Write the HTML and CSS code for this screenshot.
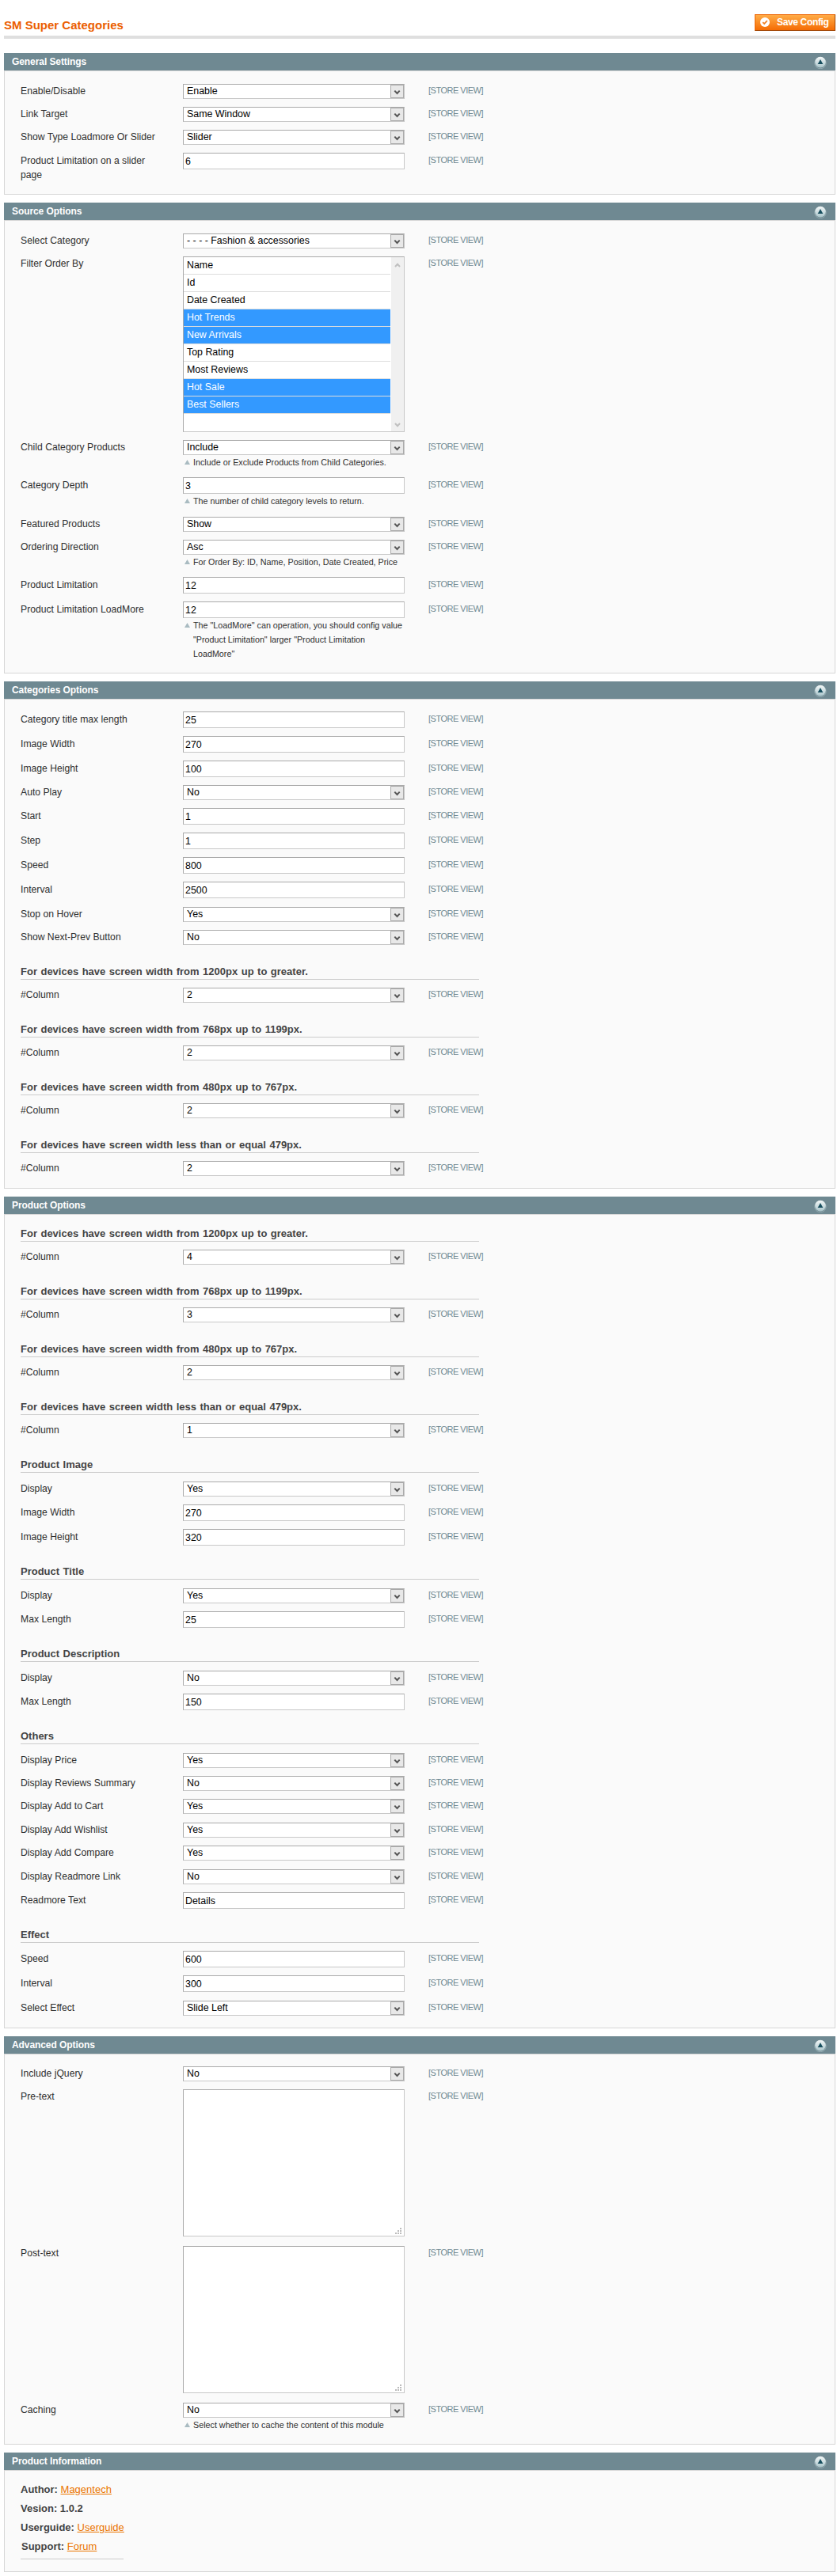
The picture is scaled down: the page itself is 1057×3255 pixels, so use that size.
FILE: index.html
```html
<!DOCTYPE html>
<html lang="en">
<head>
<meta charset="utf-8">
<title>SM Super Categories</title>
<link rel="stylesheet" href="styles.css">
</head>
<body>
<svg class="defs" width="0" height="0" aria-hidden="true">
  <defs>
    <linearGradient id="knob" x1="0" y1="0" x2="0" y2="1">
      <stop offset="0" stop-color="#f4f8f8"/><stop offset="1" stop-color="#a9c4ca"/>
    </linearGradient>
    <symbol id="collapse" viewBox="0 0 16 16">
      <circle cx="8" cy="8.6" r="7.2" fill="none" stroke="#94abb1" stroke-width="1"/>
      <circle cx="8" cy="7.6" r="6.8" fill="url(#knob)"/>
      <path d="M8 4 L11.3 10 H4.7 Z" fill="#174e5e"/>
    </symbol>
  </defs>
</svg>
<main class="page">
  <header class="head">
    <h1 class="title">SM Super Categories</h1>
    <button class="save" type="button">
      <svg width="12" height="12" viewBox="0 0 12 12"><circle cx="6" cy="6" r="6" fill="#fff"/><path d="M3.2 6.2 L5.2 8 L8.8 4.2" fill="none" stroke="#f08023" stroke-width="1.7"/></svg>
      <span>Save Config</span>
    </button>
  </header>

  <section class="panel">
    <h2 class="bar"><span>General Settings</span><svg class="toggle"><use href="#collapse"/></svg></h2>
    <div class="body body--general">
      <div class="row"><label>Enable/Disable</label><div class="select">Enable</div><span class="scope">[STORE VIEW]</span></div>
      <div class="row"><label>Link Target</label><div class="select">Same Window</div><span class="scope">[STORE VIEW]</span></div>
      <div class="row"><label>Show Type Loadmore Or Slider</label><div class="select">Slider</div><span class="scope">[STORE VIEW]</span></div>
      <div class="row row--text"><label>Product Limitation on a slider page</label><div class="input">6</div><span class="scope">[STORE VIEW]</span></div>
    </div>
  </section>

  <section class="panel">
    <h2 class="bar"><span>Source Options</span><svg class="toggle"><use href="#collapse"/></svg></h2>
    <div class="body">
      <div class="row"><label>Select Category</label><div class="select">- - - - Fashion &amp; accessories</div><span class="scope">[STORE VIEW]</span></div>
      <div class="row"><label>Filter Order By</label>
        <div class="multi">
          <ul class="options">
            <li>Name</li><li>Id</li><li>Date Created</li><li class="on">Hot Trends</li><li class="on">New Arrivals</li><li>Top Rating</li><li>Most Reviews</li><li class="on">Hot Sale</li><li class="on">Best Sellers</li>
          </ul>
          <div class="scroll">
            <svg width="8" height="6" viewBox="0 0 8 6"><path d="M1 5 L4 1.8 L7 5" fill="none" stroke="#bfbfbf" stroke-width="2"/></svg>
            <svg width="8" height="6" viewBox="0 0 8 6"><path d="M1 1 L4 4.2 L7 1" fill="none" stroke="#bfbfbf" stroke-width="2"/></svg>
          </div>
        </div>
        <span class="scope">[STORE VIEW]</span></div>
      <div class="row"><label>Child Category Products</label><div><div class="select">Include</div><p class="note">Include or Exclude Products from Child Categories.</p></div><span class="scope">[STORE VIEW]</span></div>
      <div class="row row--text"><label>Category Depth</label><div><div class="input">3</div><p class="note">The number of child category levels to return.</p></div><span class="scope">[STORE VIEW]</span></div>
      <div class="row nudge"><label>Featured Products</label><div class="select">Show</div><span class="scope">[STORE VIEW]</span></div>
      <div class="row"><label>Ordering Direction</label><div><div class="select">Asc</div><p class="note">For Order By: ID, Name, Position, Date Created, Price</p></div><span class="scope">[STORE VIEW]</span></div>
      <div class="row row--text"><label>Product Limitation</label><div class="input">12</div><span class="scope">[STORE VIEW]</span></div>
      <div class="row row--text"><label>Product Limitation LoadMore</label><div><div class="input">12</div><p class="note">The "LoadMore" can operation, you should config value<br>"Product Limitation" larger "Product Limitation<br>LoadMore"</p></div><span class="scope">[STORE VIEW]</span></div>
    </div>
  </section>

  <section class="panel">
    <h2 class="bar"><span>Categories Options</span><svg class="toggle"><use href="#collapse"/></svg></h2>
    <div class="body body--tight">
      <div class="row row--text"><label>Category title max length</label><div class="input">25</div><span class="scope">[STORE VIEW]</span></div>
      <div class="row row--text"><label>Image Width</label><div class="input">270</div><span class="scope">[STORE VIEW]</span></div>
      <div class="row row--text"><label>Image Height</label><div class="input">100</div><span class="scope">[STORE VIEW]</span></div>
      <div class="row"><label>Auto Play</label><div class="select">No</div><span class="scope">[STORE VIEW]</span></div>
      <div class="row row--text"><label>Start</label><div class="input">1</div><span class="scope">[STORE VIEW]</span></div>
      <div class="row row--text"><label>Step</label><div class="input">1</div><span class="scope">[STORE VIEW]</span></div>
      <div class="row row--text"><label>Speed</label><div class="input">800</div><span class="scope">[STORE VIEW]</span></div>
      <div class="row row--text"><label>Interval</label><div class="input">2500</div><span class="scope">[STORE VIEW]</span></div>
      <div class="row nudge"><label>Stop on Hover</label><div class="select">Yes</div><span class="scope">[STORE VIEW]</span></div>
      <div class="row"><label>Show Next-Prev Button</label><div class="select">No</div><span class="scope">[STORE VIEW]</span></div>
      <h3 class="group">For devices have screen width from 1200px up to greater.</h3>
      <div class="row"><label>#Column</label><div class="select">2</div><span class="scope">[STORE VIEW]</span></div>
      <h3 class="group">For devices have screen width from 768px up to 1199px.</h3>
      <div class="row"><label>#Column</label><div class="select">2</div><span class="scope">[STORE VIEW]</span></div>
      <h3 class="group">For devices have screen width from 480px up to 767px.</h3>
      <div class="row"><label>#Column</label><div class="select">2</div><span class="scope">[STORE VIEW]</span></div>
      <h3 class="group">For devices have screen width less than or equal 479px.</h3>
      <div class="row"><label>#Column</label><div class="select">2</div><span class="scope">[STORE VIEW]</span></div>
    </div>
  </section>

  <section class="panel">
    <h2 class="bar"><span>Product Options</span><svg class="toggle"><use href="#collapse"/></svg></h2>
    <div class="body body--flush">
      <h3 class="group">For devices have screen width from 1200px up to greater.</h3>
      <div class="row"><label>#Column</label><div class="select">4</div><span class="scope">[STORE VIEW]</span></div>
      <h3 class="group">For devices have screen width from 768px up to 1199px.</h3>
      <div class="row"><label>#Column</label><div class="select">3</div><span class="scope">[STORE VIEW]</span></div>
      <h3 class="group">For devices have screen width from 480px up to 767px.</h3>
      <div class="row"><label>#Column</label><div class="select">2</div><span class="scope">[STORE VIEW]</span></div>
      <h3 class="group">For devices have screen width less than or equal 479px.</h3>
      <div class="row"><label>#Column</label><div class="select">1</div><span class="scope">[STORE VIEW]</span></div>
      <h3 class="group">Product Image</h3>
      <div class="row nudge"><label>Display</label><div class="select">Yes</div><span class="scope">[STORE VIEW]</span></div>
      <div class="row row--text"><label>Image Width</label><div class="input">270</div><span class="scope">[STORE VIEW]</span></div>
      <div class="row row--text"><label>Image Height</label><div class="input">320</div><span class="scope">[STORE VIEW]</span></div>
      <h3 class="group">Product Title</h3>
      <div class="row nudge"><label>Display</label><div class="select">Yes</div><span class="scope">[STORE VIEW]</span></div>
      <div class="row row--text"><label>Max Length</label><div class="input">25</div><span class="scope">[STORE VIEW]</span></div>
      <h3 class="group">Product Description</h3>
      <div class="row nudge"><label>Display</label><div class="select">No</div><span class="scope">[STORE VIEW]</span></div>
      <div class="row row--text"><label>Max Length</label><div class="input">150</div><span class="scope">[STORE VIEW]</span></div>
      <h3 class="group">Others</h3>
      <div class="row nudge"><label>Display Price</label><div class="select">Yes</div><span class="scope">[STORE VIEW]</span></div>
      <div class="row"><label>Display Reviews Summary</label><div class="select">No</div><span class="scope">[STORE VIEW]</span></div>
      <div class="row"><label>Display Add to Cart</label><div class="select">Yes</div><span class="scope">[STORE VIEW]</span></div>
      <div class="row nudge"><label>Display Add Wishlist</label><div class="select">Yes</div><span class="scope">[STORE VIEW]</span></div>
      <div class="row"><label>Display Add Compare</label><div class="select">Yes</div><span class="scope">[STORE VIEW]</span></div>
      <div class="row nudge"><label>Display Readmore Link</label><div class="select">No</div><span class="scope">[STORE VIEW]</span></div>
      <div class="row row--text"><label>Readmore Text</label><div class="input">Details</div><span class="scope">[STORE VIEW]</span></div>
      <h3 class="group">Effect</h3>
      <div class="row row--text"><label>Speed</label><div class="input">600</div><span class="scope">[STORE VIEW]</span></div>
      <div class="row row--text"><label>Interval</label><div class="input">300</div><span class="scope">[STORE VIEW]</span></div>
      <div class="row nudge"><label>Select Effect</label><div class="select">Slide Left</div><span class="scope">[STORE VIEW]</span></div>
    </div>
  </section>

  <section class="panel">
    <h2 class="bar"><span>Advanced Options</span><svg class="toggle"><use href="#collapse"/></svg></h2>
    <div class="body body--tight">
      <div class="row"><label>Include jQuery</label><div class="select">No</div><span class="scope">[STORE VIEW]</span></div>
      <div class="row row--area"><label>Pre-text</label><div class="area"></div><span class="scope">[STORE VIEW]</span></div>
      <div class="row row--area"><label>Post-text</label><div class="area"></div><span class="scope">[STORE VIEW]</span></div>
      <div class="row"><label>Caching</label><div><div class="select">No</div><p class="note">Select whether to cache the content of this module</p></div><span class="scope">[STORE VIEW]</span></div>
    </div>
  </section>

  <section class="panel">
    <h2 class="bar"><span>Product Information</span><svg class="toggle"><use href="#collapse"/></svg></h2>
    <div class="body body--info">
      <ul class="info">
        <li>Author: <a href="#">Magentech</a></li>
        <li>Vesion: 1.0.2</li>
        <li>Userguide: <a href="#">Userguide</a></li>
        <li class="support">Support: <a href="#">Forum</a></li>
      </ul>
    </div>
  </section>
</main>
</body>
</html>
```
FILE: styles.css
```css
* { box-sizing: border-box; margin: 0; padding: 0; }
body { background: #fff; color: #2f2f2f; font: 12.2px/18px "Liberation Sans", Arial, sans-serif; }
ul { list-style: none; }
.defs { display: block; height: 0; }
.page { width: 1055px; height: 3255px; padding: 18px 0 0 5px; }

.head { display: flex; justify-content: space-between; align-items: flex-start; height: 31px; margin-bottom: 18px; border-bottom: 4px solid #dfdfdf; }
.title { padding-top: 5px; color: #eb5e00; font-size: 15px; line-height: 18px; font-weight: bold; }
.save { display: flex; align-items: center; gap: 9px; width: 102px; height: 21px; padding: 0 0 1px 6px; border: 1px solid; border-color: #ed6502 #a04300 #a04300 #ed6502; background: linear-gradient(#ffac47, #f56c04); color: #fff; font: bold 12px/18px "Liberation Sans", Arial, sans-serif; letter-spacing: -0.35px; white-space: nowrap; }

.panel { margin-bottom: 10px; }
.bar { display: flex; align-items: center; justify-content: space-between; height: 22px; padding: 0 11px 0 10px; background: #6f8992; color: #fff; font-size: 12px; line-height: 22px; font-weight: bold; letter-spacing: -0.08px; }
.toggle { width: 16px; height: 16px; margin-top: 2px; }
.body { padding: 16px 20px 5px; border: 1px solid #d6d6d6; background: #fafafa; }
.body--general { padding-bottom: 6px; }
.body--tight { padding-top: 15px; }
.body--flush { padding-top: 0; }

.row { display: grid; grid-template-columns: 205px 280px 1fr; align-items: start; padding-bottom: 10px; }
.row label { padding-right: 30px; white-space: normal; }
.row--text label { padding-top: 1px; margin-bottom: -1px; }
.row--area { padding-bottom: 12px; }
.nudge { padding-top: 1px; }
.scope { margin: -1px 0 0 30px; color: #6f8992; font-size: 11px; letter-spacing: -0.5px; }
.row--text .scope { margin-top: 0; }

.select, .input, .multi, .area { border: 1px solid; border-color: #aaa #c8c8c8 #c8c8c8 #aaa; background-color: #fff; color: #000; font-size: 12.4px; }
.select { height: 19px; padding-left: 4px; line-height: 17px; background-image: url("data:image/svg+xml,%3Csvg xmlns='http://www.w3.org/2000/svg' width='17' height='17'%3E%3Crect x='.5' y='.5' width='16' height='16' fill='%23e8e8e8' stroke='%23aaa'/%3E%3Cpath d='M5.3 7.6 L8.5 11 L11.7 7.6' fill='none' stroke='%23555' stroke-width='2'/%3E%3C/svg%3E"); background-position: right top; background-repeat: no-repeat; }
.input { height: 21px; padding-left: 2px; line-height: 20px; }
.area { height: 186px; background: #fff url("data:image/svg+xml,%3Csvg xmlns='http://www.w3.org/2000/svg' width='8' height='8' fill='%23bbb'%3E%3Cpath d='M6 0h2v2H6zM3 3h2v2H3zM6 3h2v2H6zM0 6h2v2H0zM3 6h2v2H3zM6 6h2v2H6z'/%3E%3C/svg%3E") right 3px bottom 2px no-repeat; }

.multi { display: flex; height: 222px; }
.options { flex: 1; padding-right: 1px; }
.options li { height: 22px; padding-left: 4px; border-bottom: 1px solid #ddd; line-height: 20px; background-clip: padding-box; }
.options .on { background-color: #39f; color: #fff; }
.scroll { display: flex; flex-direction: column; justify-content: space-between; align-items: center; width: 16px; padding: 7px 0 5px; background: #f0f0f0; }

.note { padding-left: 13px; font-size: 10.75px; line-height: 18px; white-space: nowrap; background: url("data:image/svg+xml,%3Csvg xmlns='http://www.w3.org/2000/svg' width='7' height='6'%3E%3Cpath d='M3.5 0 L7 6 H0 Z' fill='%23a9bbc1'/%3E%3C/svg%3E") 2px 6px no-repeat; }

.group { width: 579px; padding-top: 15px; margin-bottom: 10px; border-bottom: 1px solid #ccc; color: #444; font-size: 13px; line-height: 18px; font-weight: bold; word-spacing: 0.9px; }
.row--text + .group { padding-top: 14px; }

.body--info { padding: 12px 20px 15px; }
.info { width: 130px; padding-bottom: 3px; border-bottom: 1px solid #ccc; color: #444; font-size: 13px; line-height: 24px; font-weight: bold; white-space: nowrap; }
.info a { color: #ea7601; font-weight: normal; }
.support { padding-left: 1px; }
```
